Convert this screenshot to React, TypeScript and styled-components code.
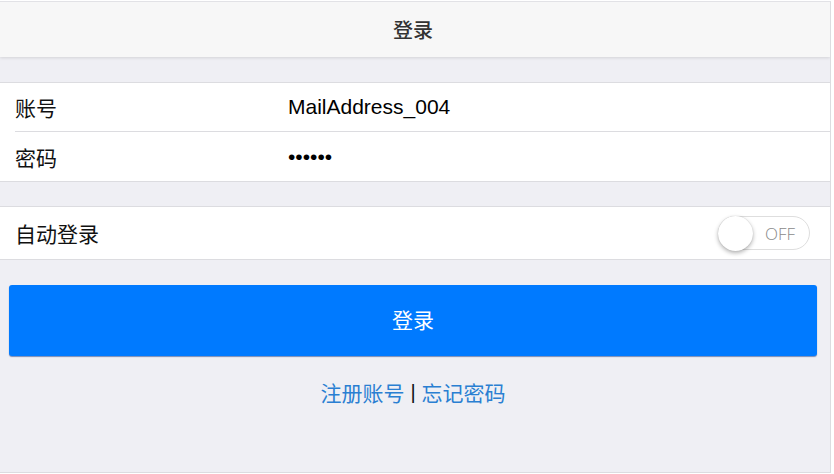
import React from "react";
import styled, { createGlobalStyle } from "styled-components";

const GlobalStyle = createGlobalStyle`
  html, body { margin: 0; padding: 0; background: #ffffff; }
  body { font-family: "Liberation Sans", "Noto Sans CJK SC", sans-serif; }
`;

const Page = styled.div`
  width: 830px;
  height: 470px;
  margin-top: 1px;
  background: #efeff4;
  border-top: 1px solid #e2e2e6;
  border-right: 1px solid #dcdce0;
  border-bottom: 1px solid #dcdce0;
  display: flex;
  flex-direction: column;
  overflow: hidden;
`;

const Header = styled.header`
  height: 55px;
  background: #f7f7f7;
  display: flex;
  align-items: center;
  justify-content: center;
  box-shadow: 0 1px 3px rgba(0, 0, 0, 0.12);
  position: relative;
  z-index: 1;
`;

const Title = styled.h1`
  margin: 0 0 0 -4px;
  font-family: "Noto Sans CJK SC", sans-serif;
  font-size: 20px;
  font-weight: 500;
  color: #333;
`;

const Group = styled.section<{ $top: number }>`
  margin-top: ${(p) => p.$top}px;
  background: #fff;
  border-top: 1px solid #dcdce0;
  border-bottom: 1px solid #dcdce0;
`;

const Row = styled.div<{ $h: number; $divider?: boolean }>`
  height: ${(p) => p.$h}px;
  margin-left: 15px;
  display: flex;
  align-items: center;
  padding-right: 20px;
  border-bottom: ${(p) => (p.$divider ? "1px solid #dcdce0" : "none")};
`;

const Label = styled.span`
  font-family: "Noto Sans CJK SC", sans-serif;
  font-size: 21px;
  color: #111;
  width: 273px;
  flex: none;
`;

const Value = styled.span`
  font-family: "Liberation Sans", Arial, sans-serif;
  font-size: 21px;
  color: #000;
`;

const Spacer = styled.div`
  flex: 1;
`;

const Toggle = styled.div`
  width: 92px;
  height: 34px;
  border: 1px solid #dedede;
  border-radius: 18px;
  background: #fff;
  position: relative;
  display: flex;
  align-items: center;
  justify-content: flex-end;
  padding-right: 14px;
  box-sizing: border-box;
`;

const Knob = styled.div`
  position: absolute;
  left: -1px;
  top: -1px;
  width: 35px;
  height: 35px;
  border-radius: 50%;
  background: #fff;
  box-shadow: 0 2px 4px rgba(0, 0, 0, 0.3), 0 0 1px rgba(0, 0, 0, 0.2);
`;

const ToggleText = styled.span`
  font-family: "Open Sans", "Liberation Sans", sans-serif;
  font-weight: 300;
  font-size: 17px;
  color: #8a8a8a;
`;

const LoginButton = styled.button`
  margin: 25px 13px 0 9px;
  height: 71px;
  background: #007aff;
  border: none;
  border-radius: 3px;
  box-shadow: 0 1px 1px rgba(0, 40, 120, 0.5);
  color: #fff;
  font-family: "Noto Sans CJK SC", sans-serif;
  font-size: 21px;
  display: flex;
  align-items: center;
  justify-content: center;
  padding: 0 0 4px;
`;

const Links = styled.div`
  margin-top: 21px;
  margin-right: 4px;
  display: flex;
  justify-content: center;
  align-items: center;
  gap: 6px;
  font-family: "Noto Sans CJK SC", sans-serif;
  font-size: 21px;
`;

const LinkText = styled.a`
  color: #2a7fd2;
  text-decoration: none;
`;

const Sep = styled.span`
  color: #111;
  font-family: "Liberation Sans", sans-serif;
  font-size: 20px;
`;

export default function App() {
  return (
    <>
      <GlobalStyle />
      <Page>
        <Header>
          <Title>登录</Title>
        </Header>
        <Group $top={25}>
          <Row $h={48} $divider>
            <Label>账号</Label>
            <Value>MailAddress_004</Value>
          </Row>
          <Row $h={49}>
            <Label>密码</Label>
            <Value>••••••</Value>
          </Row>
        </Group>
        <Group $top={24}>
          <Row $h={52}>
            <Label>自动登录</Label>
            <Spacer />
            <Toggle>
              <Knob />
              <ToggleText>OFF</ToggleText>
            </Toggle>
          </Row>
        </Group>
        <LoginButton>登录</LoginButton>
        <Links>
          <LinkText>注册账号</LinkText>
          <Sep>|</Sep>
          <LinkText>忘记密码</LinkText>
        </Links>
      </Page>
    </>
  );
}
